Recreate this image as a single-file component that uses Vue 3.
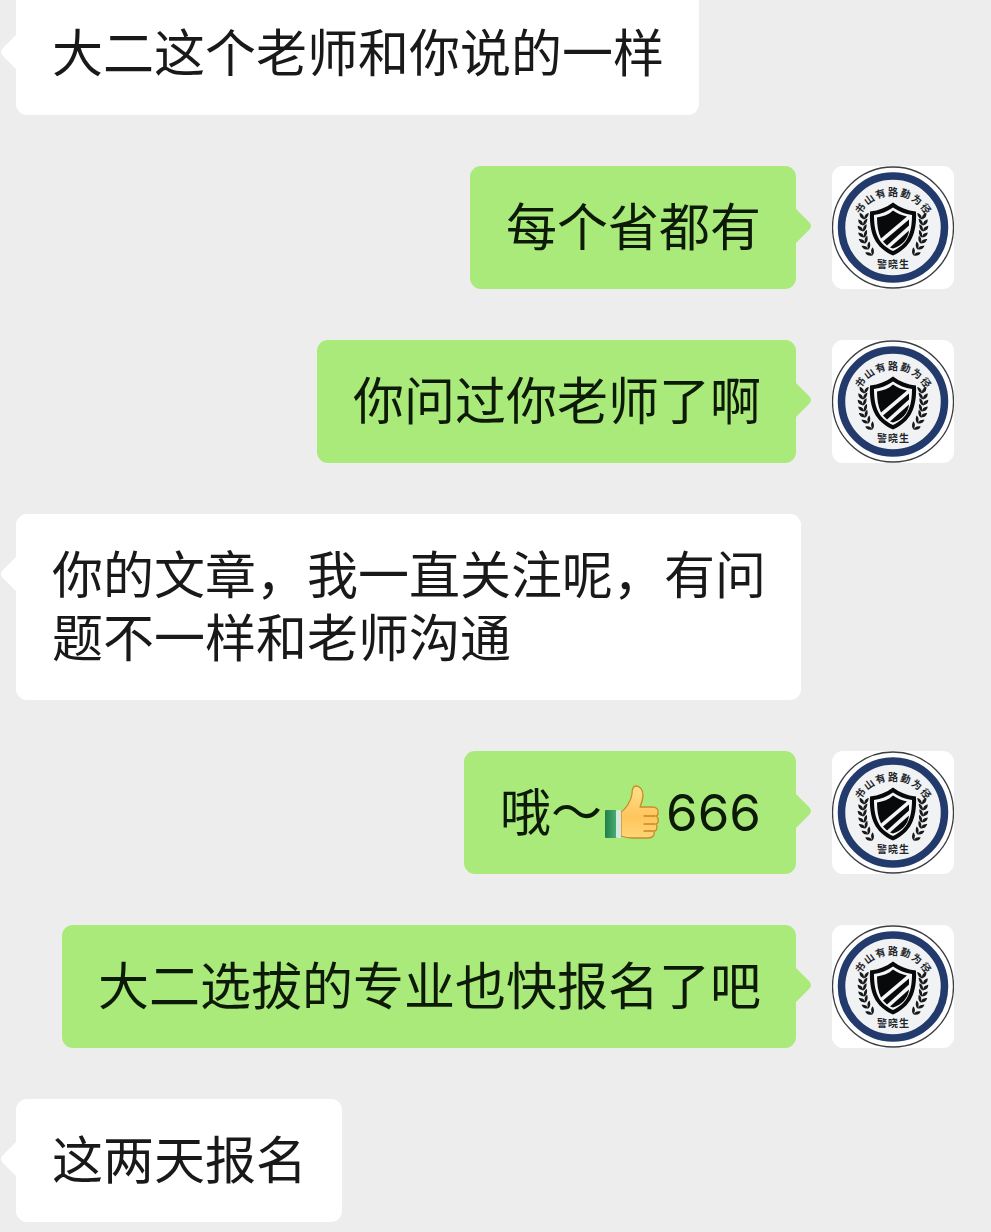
<script setup>
const messages = [
  { id: 1, mine: false, parts: ['大二这个老师和你说的一样'] },
  { id: 2, mine: true, parts: ['每个省都有'] },
  { id: 3, mine: true, parts: ['你问过你老师了啊'] },
  { id: 4, mine: false, parts: ['你的文章，我一直关注呢，有问题不一样和老师沟通'] },
  { id: 5, mine: true, parts: ['哦～', 'thumb', '666'] },
  { id: 6, mine: true, parts: ['大二选拔的专业也快报名了吧'] },
  { id: 7, mine: false, parts: ['这两天报名'] },
]

const motto = [...'书山有路勤为径'].map((char, i) => ({ char, angle: (i - 3) * 18 }))

// Leaf pairs along the left branch: x, y and tilt of each pair
const leaves = [
  [32, 52, 8],
  [31, 58, 4],
  [31, 64, -4],
  [32, 70, -10],
  [33, 76, -16],
  [36, 82, -22],
  [40, 88, -28],
]
</script>

<template>
  <main class="chat">
    <svg class="defs" aria-hidden="true">
      <defs>
        <linearGradient id="skin" x1="0" y1="0" x2="0" y2="1">
          <stop offset="0" stop-color="#ffe08a" />
          <stop offset="0.6" stop-color="#ffc55c" />
          <stop offset="1" stop-color="#ffd777" />
        </linearGradient>
        <linearGradient id="cuff" x1="0" y1="0" x2="1" y2="0">
          <stop offset="0" stop-color="#1f7f48" />
          <stop offset="1" stop-color="#4fb477" />
        </linearGradient>
        <g id="branch" fill="#17191b">
          <g v-for="leaf in leaves" :key="leaf[1]" :transform="`translate(${leaf[0]} ${leaf[1]}) rotate(${leaf[2]})`">
            <path d="M0 1C-4 0-5-2-5-5C-2-4 0-3 0 1Z" />
            <path d="M0 1C0-3 1-5 4-6C4-3 3 0 0 1Z" />
          </g>
        </g>
      </defs>
    </svg>

    <ol class="messages">
      <li v-for="message in messages" :key="message.id" class="row" :class="{ mine: message.mine }">
        <div class="bubble">
          <svg class="tail" viewBox="0 0 15 34" aria-hidden="true">
            <path d="M0 0L13 13Q17 17 13 21L0 34Z" />
          </svg>
          <p class="text">
            <template v-for="part in message.parts" :key="part">
              <svg v-if="part === 'thumb'" class="emoji" viewBox="0 0 56 56" role="img" aria-label="👍">
                <path
                  d="M17 27C22 24 27 16 28 9C28 4 29 1 32 1C36 1 39 5 39 10C39 15 37 19 36 22H48C52 22 55 24 54 28C54 30 53 31 52 31C55 33 55 38 52 39C54 42 53 46 50 46C51 50 49 53 44 53H28C23 53 20 52 17 51Z"
                  fill="url(#skin)" stroke="#c98a2c" stroke-width="1.3" stroke-linejoin="round"
                />
                <path d="M40 31H51M40 39H51M40 46H49" fill="none" stroke="#c98427" stroke-width="1.3" stroke-linecap="round" />
                <rect x="1" y="25" width="13" height="28" rx="1" fill="url(#cuff)" />
                <rect x="12" y="25" width="5" height="28" rx="1" fill="#d5e8df" />
              </svg>
              <template v-else>{{ part }}</template>
            </template>
          </p>
        </div>
        <svg v-if="message.mine" class="avatar" viewBox="0 0 122 122" role="img" aria-label="警晓生">
          <circle cx="61" cy="61" r="60.5" fill="#fdfdfe" stroke="#3b3e44" stroke-width="1.3" />
          <circle cx="61" cy="61" r="51.5" fill="#f1f2f4" stroke="#233a6c" stroke-width="7.5" />
          <g class="seal">
            <text v-for="item in motto" :key="item.char" x="61" y="29" :transform="`rotate(${item.angle} 61 66)`">{{ item.char }}</text>
            <text x="50" y="101">警</text>
            <text x="61" y="101">晓</text>
            <text x="72" y="101">生</text>
          </g>
          <use href="#branch" />
          <use href="#branch" transform="translate(122 0) scale(-1 1)" />
          <path d="M61 36C68 41 75 44 84 45C85 67 79 81 61 89C43 81 37 67 38 45C47 44 54 41 61 36Z" fill="#08090a" />
          <path d="M61 41C67 45 73 47.500 80 48.500C80 67 75 78 61 84.500C47 78 42 67 42 48.500C49 47.500 55 45 61 41Z" fill="#f4f5f6" />
          <path d="M61 44C65 47 70 49 75 50L49 72C46 66 45 59 45 51C51 50 57 48 61 44Z" fill="#08090a" />
          <path d="M77 53L77 59L55 79L51 75Z" fill="#08090a" />
          <path d="M77 64C76 73 70 79 61 82L58 81Z" fill="#08090a" />
        </svg>
      </li>
    </ol>
  </main>
</template>

<style>
body {
  margin: 0;
  background: #ededed;
}
</style>

<style scoped>
.chat {
  min-height: 100vh;
  box-sizing: border-box;
  overflow: hidden;
  background: #ededed;
  color: #191919;
  font-family: Inter, "Noto Sans CJK SC", sans-serif;
  font-size: 51px;
  line-height: 63px;
}

.defs {
  position: absolute;
  width: 0;
  height: 0;
}

.messages {
  display: flex;
  flex-direction: column;
  gap: 51px;
  margin: -8px 0 0;
  padding: 0 37px 10px 16px;
  list-style: none;
}

.row {
  display: flex;
  align-items: flex-start;
  gap: 36px;
}

.mine {
  justify-content: flex-end;
}

.bubble {
  position: relative;
  box-sizing: border-box;
  max-width: 785px;
  padding: 30px 35px 30px 36px;
  border-radius: 11px;
  background: #fff;
}

.mine .bubble {
  background: #a9ea7a;
  color: #0d1a08;
}

.text {
  display: flow-root;
  margin: 0;
}

.tail {
  position: absolute;
  top: 43px;
  left: -15px;
  width: 15px;
  height: 34px;
  fill: #fff;
  transform: scaleX(-1);
}

.mine .tail {
  right: -15px;
  left: auto;
  fill: #a9ea7a;
  transform: none;
}

.emoji {
  width: 56px;
  height: 56px;
  margin: 0 6px 0 2px;
  vertical-align: -10px;
}

.avatar {
  flex: none;
  width: 122px;
  height: 123px;
  border-radius: 11px;
  background: #fff;
}

.seal {
  fill: #22262c;
  font-family: "Noto Sans CJK SC", sans-serif;
  font-size: 10px;
  font-weight: 700;
  text-anchor: middle;
}
</style>
